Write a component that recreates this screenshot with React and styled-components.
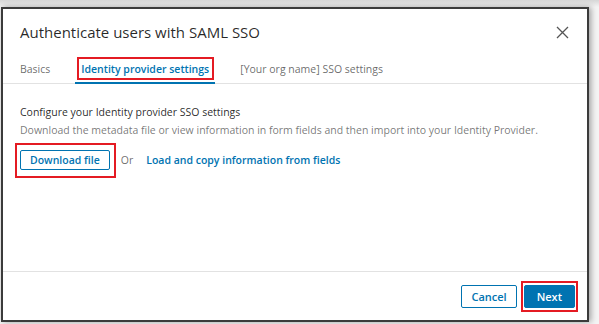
import React from "react";
import styled, { createGlobalStyle } from "styled-components";

const Global = createGlobalStyle`
     html, body {
          margin: 0;
          padding: 0;
          background: #ffffff;
     }
     body {
          font-family: "Open Sans", "Noto Sans", sans-serif;
          width: 599px;
          height: 324px;
          overflow: hidden;
     }
`;

const S = {
     Page: styled.div`
          padding: 7px 10px 2px 1px;
          background: linear-gradient(to bottom, #d6d6d6 0, #f4f4f4 7px, #f4f4f4 100%);
     `,

     Dialog: styled.div`
          box-sizing: border-box;
          width: 588px;
          height: 315px;
          border: 2px solid #3b3b3b;
          background: #ffffff;
          box-shadow: 2px 0 6px rgba(0, 0, 0, 0.35);
          display: flex;
          flex-direction: column;
     `,

     Header: styled.div`
          display: flex;
          align-items: center;
          justify-content: space-between;
          padding: 11px 18px 0 17px;
          height: 24px;
     `,

     Title: styled.h2`
          margin: 0;
          font-weight: 400;
          font-size: 15px;
          color: rgba(0, 0, 0, 0.85);
     `,

     Close: styled.button`
          border: 0;
          background: none;
          padding: 0;
          width: 13px;
          height: 13px;
          display: flex;
          cursor: pointer;
     `,

     Tabs: styled.div`
          display: flex;
          gap: 19px;
          padding: 0 11px;
          margin-top: 11px;
          border-bottom: 1px solid #e2e2e2;
     `,

     Tab: styled.div`
          position: relative;
          padding: 0 6px;
          height: 27px;
          display: flex;
          align-items: center;
          font-size: 10.5px;
          font-weight: ${(p) => (p.$active ? 600 : 400)};
          color: ${(p) => (p.$active ? "#0073b1" : "rgba(0, 0, 0, 0.6)")};
          border-bottom: 2px solid ${(p) => (p.$active ? "#0073b1" : "transparent")};
          margin-bottom: -1px;
     `,

     Mark: styled.span`
          position: absolute;
          border: 2px solid #e41b23;
          pointer-events: none;
     `,

     Body: styled.div`
          flex: 1;
          padding: 19px 17px 0;
     `,

     Heading: styled.p`
          margin: 0;
          font-size: 10.5px;
          line-height: 18px;
          color: rgba(0, 0, 0, 0.85);
     `,

     Hint: styled.p`
          margin: 0;
          font-size: 10.5px;
          line-height: 18px;
          color: rgba(0, 0, 0, 0.55);
     `,

     Actions: styled.div`
          display: flex;
          align-items: center;
          gap: 11px;
          margin-top: 11px;
     `,

     Outline: styled.button`
          position: relative;
          box-sizing: border-box;
          height: ${(p) => p.$h || 20}px;
          padding: 0 ${(p) => p.$px || 9}px;
          border: 1px solid #0073b1;
          border-radius: 2px;
          background: #fff;
          color: #0073b1;
          font-family: inherit;
          font-size: ${(p) => p.$fs || 10.5}px;
          font-weight: 600;
     `,

     Solid: styled.button`
          position: relative;
          box-sizing: border-box;
          height: 23px;
          padding: 0 12px;
          border: 1px solid #0073b1;
          border-radius: 2px;
          background: #0073b1;
          color: #fff;
          font-family: inherit;
          font-size: 11px;
          font-weight: 600;
     `,

     Or: styled.span`
          font-size: 10.5px;
          color: rgba(0, 0, 0, 0.6);
          margin-right: 2px;
     `,

     Link: styled.a`
          font-size: 10.5px;
          font-weight: 600;
          color: #0073b1;
          text-decoration: none;
     `,

     Footer: styled.div`
          display: flex;
          justify-content: flex-end;
          gap: 7px;
          padding: 13px 12px 12px;
          border-top: 1px solid #e2e2e2;
     `,
};

const CloseIcon = () => (
     <svg width="13" height="13" viewBox="0 0 13 13">
          <path d="M1 1 L12 12 M12 1 L1 12" stroke="#555" strokeWidth="1.3" fill="none" />
     </svg>
);

export default function App() {
     return (
          <>
               <Global />
               <S.Page>
                    <S.Dialog>
                         <S.Header>
                              <S.Title>Authenticate users with SAML SSO</S.Title>
                              <S.Close aria-label="Close">
                                   <CloseIcon />
                              </S.Close>
                         </S.Header>
                         <S.Tabs>
                              <S.Tab>Basics</S.Tab>
                              <S.Tab $active>
                                   Identity provider settings
                                   <S.Mark style={{ left: 2, right: 1, top: 2, bottom: 2 }} />
                              </S.Tab>
                              <S.Tab>[Your org name] SSO settings</S.Tab>
                         </S.Tabs>
                         <S.Body>
                              <S.Heading>Configure your Identity provider SSO settings</S.Heading>
                              <S.Hint>
                                   Download the metadata file or view information in form fields and then import into your
                                   Identity Provider.
                              </S.Hint>
                              <S.Actions>
                                   <S.Outline>
                                        Download file
                                        <S.Mark style={{ left: -6, right: -7, top: -8, bottom: -9 }} />
                                   </S.Outline>
                                   <S.Or>Or</S.Or>
                                   <S.Link href="#">Load and copy information from fields</S.Link>
                              </S.Actions>
                         </S.Body>
                         <S.Footer>
                              <S.Outline $h={23} $fs={11}>Cancel</S.Outline>
                              <S.Solid>
                                   Next
                                   <S.Mark style={{ left: -4, right: -4, top: -5, bottom: -5 }} />
                              </S.Solid>
                         </S.Footer>
                    </S.Dialog>
               </S.Page>
          </>
     );
}
